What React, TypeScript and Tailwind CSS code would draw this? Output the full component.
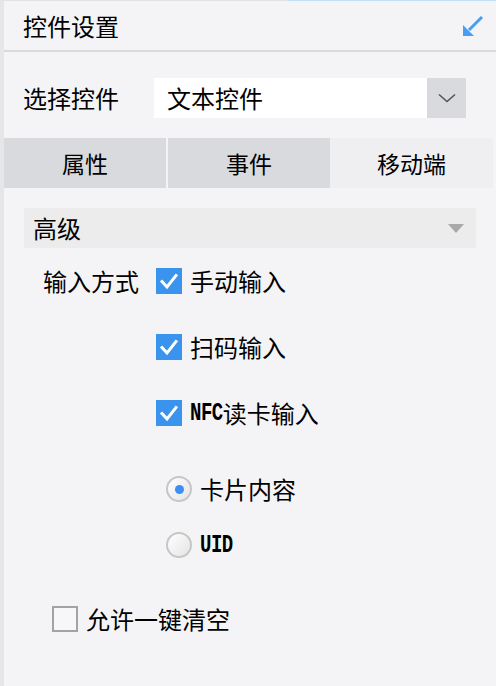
import React from "react";

const cjk = "font-['Noto_Sans_CJK_SC',sans-serif]";
const latin = "inline-block font-['Liberation_Mono',monospace] font-bold text-[19px] tracking-[-0.5px] scale-y-[1.35]";

function Check({ checked }: { checked: boolean }) {
  if (!checked) {
    return <div className="w-[26px] h-[26px] shrink-0 border-2 border-[#a3a3a3] bg-[#f7f7f9]" />;
  }
  return (
    <div className="w-[26px] h-[26px] shrink-0 bg-[#3a93ec] flex items-center justify-center">
      <svg width="26" height="26" viewBox="0 0 26 26">
        <polyline points="6,13.5 11,19 20,7.5" fill="none" stroke="#ffffff" strokeWidth="3" strokeLinecap="square" />
      </svg>
    </div>
  );
}

function Radio({ checked }: { checked: boolean }) {
  return (
    <div className="w-[26px] h-[26px] shrink-0 rounded-full border-2 border-[#c6c6c6] bg-gradient-to-br from-white to-[#e4e4e4] flex items-center justify-center">
      {checked && <div className="w-[9px] h-[9px] rounded-full bg-[#3d8ef3]" />}
    </div>
  );
}

export default function App() {
  return (
    <div className={`w-[496px] h-[686px] bg-[#f4f4f6] flex flex-col overflow-hidden text-black ${cjk}`}>
      {/* top hairline */}
      <div className="flex h-[1px] shrink-0">
        <div className="w-[288px] bg-[#e2e2e4]" />
        <div className="flex-1 bg-[#bfe0f6]" />
      </div>
      <div className="flex flex-1">
        <div className="w-[4px] bg-[#e6e6e8] shrink-0" />
        <div className="flex-1 flex flex-col">
          {/* header */}
          <div className="h-[51px] flex items-center justify-between pl-[19px] pr-[12px] border-b-2 border-[#dadadc]">
            <span className="text-[24px] leading-none">控件设置</span>
            <svg width="22" height="22" viewBox="0 0 22 22">
              <line x1="20" y1="2" x2="7" y2="15" stroke="#4a9cf5" strokeWidth="3" />
              <polygon points="1,21 1,10 12,21" fill="#4a9cf5" />
            </svg>
          </div>

          {/* select row */}
          <div className="flex items-center mt-[26px] pl-[19px]">
            <span className="w-[131px] text-[24px] leading-none">选择控件</span>
            <div className="flex h-[40px] w-[312px]">
              <div className="flex-1 bg-white flex items-center pl-[13px] text-[24px] leading-none">文本控件</div>
              <div className="w-[39px] bg-[#d9dadd] flex items-center justify-center">
                <svg width="18" height="10" viewBox="0 0 18 10">
                  <polyline points="1,1.5 9,8.5 17,1.5" fill="none" stroke="#555" strokeWidth="1.6" />
                </svg>
              </div>
            </div>
          </div>

          {/* tabs */}
          <div className="flex mt-[20px] h-[50px] w-[489px] text-[23px] leading-none">
            <div className="w-[162px] bg-[#d9dadd] flex items-center justify-center">属性</div>
            <div className="w-[2px] bg-[#f4f4f6]" />
            <div className="w-[162px] bg-[#d9dadd] flex items-center justify-center">事件</div>
            <div className="flex-1 bg-[#efeff1] flex items-center justify-center">移动端</div>
          </div>

          {/* section */}
          <div className="mt-[20px] mx-[20px] h-[40px] bg-[#ececec] flex items-center justify-between pl-[9px] pr-[12px]">
            <span className="text-[24px] leading-none">高级</span>
            <svg width="16" height="9" viewBox="0 0 16 9">
              <polygon points="0,0 16,0 8,9" fill="#a9a9a9" />
            </svg>
          </div>

          <div className="flex flex-col mt-[20px] text-[24px] leading-none">
            <div className="flex items-center pl-[39px]">
              <span className="w-[113px]">输入方式</span>
              <Check checked />
              <span className="ml-[8px]">手动输入</span>
            </div>
            <div className="flex items-center pl-[152px] mt-[40px]">
              <Check checked />
              <span className="ml-[8px]">扫码输入</span>
            </div>
            <div className="flex items-center pl-[152px] mt-[40px]">
              <Check checked />
              <span className="ml-[8px] flex items-center">
                <span className={latin}>NFC</span>
                <span>读卡输入</span>
              </span>
            </div>
            <div className="flex items-center pl-[162px] mt-[50px]">
              <Radio checked />
              <span className="ml-[8px]">卡片内容</span>
            </div>
            <div className="flex items-center pl-[162px] mt-[30px]">
              <Radio checked={false} />
              <span className={`ml-[8px] ${latin}`}>UID</span>
            </div>
            <div className="flex items-center pl-[48px] mt-[48px]">
              <Check checked={false} />
              <span className="ml-[8px]">允许一键清空</span>
            </div>
          </div>
        </div>
      </div>
    </div>
  );
}
